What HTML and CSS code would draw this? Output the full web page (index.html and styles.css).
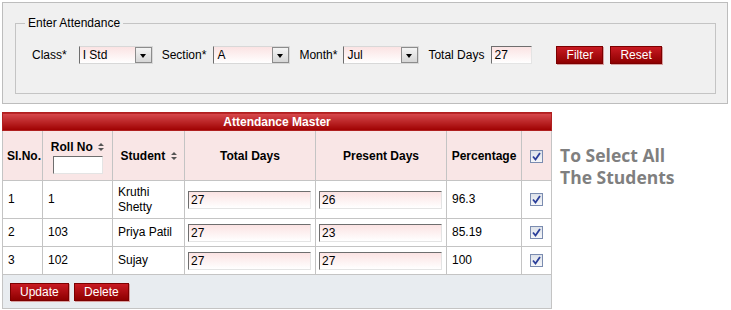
FILE: index.html
```html
<!DOCTYPE html>
<html lang="en">

<head>
    <meta charset="UTF-8">
    <title>Attendance Master</title>
    <link rel="stylesheet" href="styles.css">
</head>

<body>

    <div class="panel">
        <fieldset class="filtro">
            <legend>Enter Attendance</legend>
            <div class="linha">
                <span class="rotulo">Class*</span>
                <span class="combo combo-classe"><span class="combo-texto">I Std</span><span class="seta"></span></span>
                <span class="rotulo rotulo-secao">Section*</span>
                <span class="combo combo-secao"><span class="combo-texto">A</span><span class="seta"></span></span>
                <span class="rotulo">Month*</span>
                <span class="combo combo-mes"><span class="combo-texto">Jul</span><span class="seta"></span></span>
                <span class="rotulo">Total Days</span>
                <input type="text" class="caixa caixa-total" value="27">
                <button class="botao botao-filtro">Filter</button>
                <button class="botao">Reset</button>
            </div>
        </fieldset>
    </div>

    <div class="conteudo">
        <table class="tabela">
            <colgroup>
                <col style="width: 40px">
                <col style="width: 70px">
                <col style="width: 72px">
                <col style="width: 131px">
                <col style="width: 131px">
                <col style="width: 75px">
                <col style="width: 30px">
            </colgroup>
            <thead>
                <tr>
                    <th colspan="7" class="titulo">Attendance Master</th>
                </tr>
                <tr class="cabecalho">
                    <th>Sl.No.</th>
                    <th class="th-roll">
                        <div>Roll No <svg class="ordem" width="6" height="8" viewBox="0 0 6 8"><path d="M3 0 L6 3 H0 Z M0 5 H6 L3 8 Z" fill="#555"/></svg></div>
                        <input type="text" class="caixa-roll">
                    </th>
                    <th>Student <svg class="ordem" width="6" height="8" viewBox="0 0 6 8"><path d="M3 0 L6 3 H0 Z M0 5 H6 L3 8 Z" fill="#555"/></svg></th>
                    <th>Total Days</th>
                    <th>Present Days</th>
                    <th>Percentage</th>
                    <th><span class="check"><svg width="9" height="9" viewBox="0 0 9 9"><path d="M1 4.5 L3.5 7.5 L8 1" fill="none" stroke="#2b3f9a" stroke-width="1.8"/></svg></span></th>
                </tr>
            </thead>
            <tbody>
                <tr class="linha-alta">
                    <td>1</td>
                    <td>1</td>
                    <td>Kruthi<br>Shetty</td>
                    <td><input type="text" class="caixa caixa-dias" value="27"></td>
                    <td><input type="text" class="caixa caixa-dias" value="26"></td>
                    <td>96.3</td>
                    <td class="centro"><span class="check"><svg width="9" height="9" viewBox="0 0 9 9"><path d="M1 4.5 L3.5 7.5 L8 1" fill="none" stroke="#2b3f9a" stroke-width="1.8"/></svg></span></td>
                </tr>
                <tr>
                    <td>2</td>
                    <td>103</td>
                    <td>Priya Patil</td>
                    <td><input type="text" class="caixa caixa-dias" value="27"></td>
                    <td><input type="text" class="caixa caixa-dias" value="23"></td>
                    <td>85.19</td>
                    <td class="centro"><span class="check"><svg width="9" height="9" viewBox="0 0 9 9"><path d="M1 4.5 L3.5 7.5 L8 1" fill="none" stroke="#2b3f9a" stroke-width="1.8"/></svg></span></td>
                </tr>
                <tr>
                    <td>3</td>
                    <td>102</td>
                    <td>Sujay</td>
                    <td><input type="text" class="caixa caixa-dias" value="27"></td>
                    <td><input type="text" class="caixa caixa-dias" value="27"></td>
                    <td>100</td>
                    <td class="centro"><span class="check"><svg width="9" height="9" viewBox="0 0 9 9"><path d="M1 4.5 L3.5 7.5 L8 1" fill="none" stroke="#2b3f9a" stroke-width="1.8"/></svg></span></td>
                </tr>
            </tbody>
            <tfoot>
                <tr>
                    <td colspan="7" class="rodape">
                        <button class="botao">Update</button>
                        <button class="botao botao-apagar">Delete</button>
                    </td>
                </tr>
            </tfoot>
        </table>

        <div class="dica">To Select All<br>The Students</div>
    </div>

</body>

</html>
```

FILE: styles.css
```css
* {
    margin: 0;
    padding: 0;
    box-sizing: border-box;
}

body {
    padding: 2px;
    font-family: "Liberation Sans", Arial, sans-serif;
    font-size: 12px;
    color: #000;
    background: #fff;
}

.panel {
    width: 726px;
    height: 102px;
    background: #f0f0f0;
    border: 1px solid #bdbdbd;
    padding: 13px 11px 0 12px;
}

.filtro {
    border: 1px solid #c4c4c4;
    height: 78px;
    padding: 16px 16px 0 16px;
}

.filtro legend {
    padding: 0 3px;
    margin-left: -7px;
    font-size: 12px;
    line-height: 14px;
}

.linha {
    display: flex;
    align-items: center;
    height: 18px;
}

.rotulo {
    margin-right: 6px;
}

.rotulo-secao {
    margin-right: 7px;
}

.combo {
    display: flex;
    height: 18px;
    border: 1px solid #d8d8d8;
    border-left-color: #6e6e6e;
    background: linear-gradient(#fbe3e3, #ffffff);
    margin-right: 9px;
}

.combo-classe {
    width: 74px;
    margin-left: 6px;
}

.combo-secao {
    width: 77px;
}

.combo-mes {
    width: 76px;
}

.combo-texto {
    flex: 1;
    padding-left: 3px;
    line-height: 16px;
}

.seta {
    width: 17px;
    height: 16px;
    border: 1px solid #8c8c8c;
    background: linear-gradient(#f4f4f4, #d6d6d6);
    position: relative;
}

.seta::after {
    content: "";
    position: absolute;
    left: 4px;
    top: 6px;
    border-left: 3.5px solid transparent;
    border-right: 3.5px solid transparent;
    border-top: 4px solid #000;
}

.caixa {
    height: 18px;
    border: 1px solid #e4e4e4;
    border-top-color: #6e6e6e;
    border-left-color: #6e6e6e;
    background: linear-gradient(#fbe3e3, #ffffff);
    font-family: "Liberation Sans", Arial, sans-serif;
    font-size: 12px;
    padding-left: 2px;
    outline: none;
}

.caixa-total {
    width: 41px;
    margin-left: 1px;
    margin-right: 24px;
}

.botao {
    height: 18px;
    padding: 0 9px;
    border: 1px solid #7c0000;
    background: linear-gradient(#c81a22, #8e0000);
    color: #fff;
    font-family: "Liberation Sans", Arial, sans-serif;
    font-size: 12px;
    box-shadow: 1px 1px 0 #d8a0a0;
}

.botao-filtro {
    width: 47px;
    margin-right: 7px;
}

.conteudo {
    display: flex;
    align-items: flex-start;
    margin-top: 8px;
}

.tabela {
    width: 549px;
    border-collapse: collapse;
    table-layout: fixed;
}

.tabela th,
.tabela td {
    border: 1px solid #c4c4c4;
}

.titulo {
    height: 18px;
    color: #fff;
    font-weight: bold;
    background: linear-gradient(#d84a4e, #9e0000);
    border-color: #b02020 !important;
}

.cabecalho th {
    height: 50px;
    background: #f9e6e6;
    font-weight: bold;
    text-align: center;
}

.cabecalho th:first-child {
    text-align: left;
    padding-left: 4px;
}

.th-roll {
    vertical-align: top;
    padding-top: 9px;
}

.th-roll div {
    line-height: 14px;
}

.caixa-roll {
    width: 50px;
    height: 18px;
    margin-top: 2px;
    border: 1px solid #e4e4e4;
    border-top-color: #6e6e6e;
    border-left-color: #6e6e6e;
    background: #fff;
}

.ordem {
    margin-left: 2px;
    vertical-align: 0;
}

.tabela td {
    height: 28px;
    padding-left: 5px;
    line-height: 15px;
}

.linha-alta td {
    height: 38px;
}

.tabela td:nth-child(4),
.tabela td:nth-child(5) {
    padding-left: 3px;
}

.caixa-dias {
    width: 123px;
    display: block;
}

.centro {
    text-align: center;
    padding-left: 0 !important;
}

.check {
    display: inline-flex;
    align-items: center;
    justify-content: center;
    width: 13px;
    height: 13px;
    border: 1px solid #7b8cb0;
    background: linear-gradient(#dde2ea, #f6f7f9);
    vertical-align: middle;
}

.tabela .rodape {
    height: 34px;
    background: #e8ecf0;
    padding-left: 7px;
}

.botao-apagar {
    margin-left: 2px;
}

.dica {
    margin-left: 8px;
    margin-top: 32px;
    font-family: "Open Sans", sans-serif;
    font-size: 17.5px;
    line-height: 22px;
    font-weight: bold;
    color: #7f7f7f;
}
```
